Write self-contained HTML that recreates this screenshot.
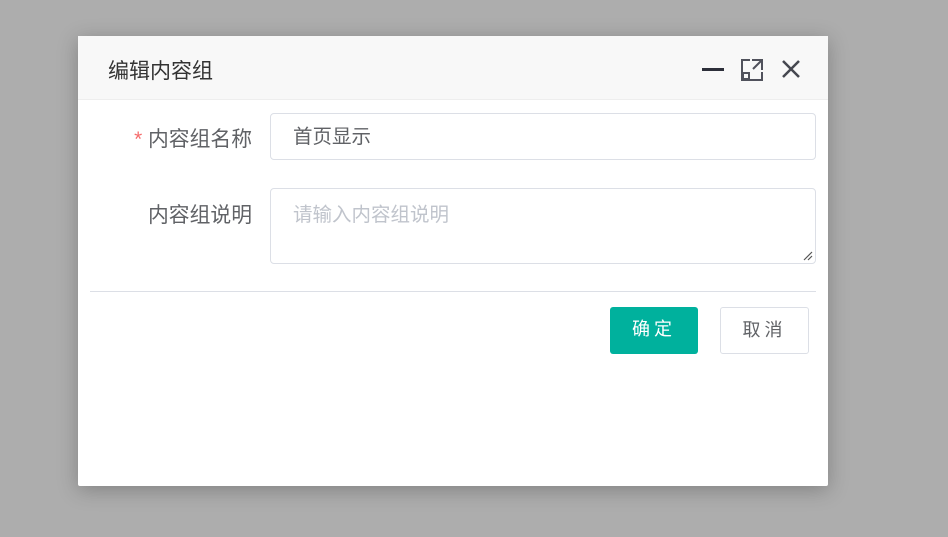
<!DOCTYPE html>
<html><head><meta charset="utf-8"><style>
body{margin:0;width:948px;height:537px;background:#adadad;font-family:"Liberation Sans","Noto Sans CJK SC",sans-serif;position:relative;overflow:hidden}
.dlg{position:absolute;left:78px;top:36px;width:750px;height:450px;background:#fff;border-radius:2px;box-shadow:0 4px 20px rgba(0,0,0,.25)}
.hd{height:63px;background:#f8f8f8;border-bottom:1px solid #eee;position:relative}
.hd .t{position:absolute;left:30px;top:19px;font-size:21px;color:#333}
.lbl{position:absolute;right:576px;font-size:20.8px;color:#606266;white-space:nowrap}
.inp{position:absolute;left:192px;width:546px;border:1px solid #dcdfe6;border-radius:4px;box-sizing:border-box;font-size:19.5px}
.btn{position:absolute;top:271px;height:47px;border-radius:3px;box-sizing:border-box;font-size:18px;text-align:center;line-height:45px;letter-spacing:4px}
</style></head><body>
<div class="dlg">
<div class="hd"><div class="t">编辑内容组</div>
<svg style="position:absolute;left:620px;top:20px" width="110" height="26" viewBox="0 0 110 26">
<rect x="4" y="12" width="22" height="3" fill="#2d2f3a"/>
<g stroke="#50525c" stroke-width="2" fill="none"><path d="M52 4h-8v20h20v-8"/><path d="M54 4h10v10"/><path d="M64 4l-9 9"/><rect x="45" y="17" width="6" height="6"/>
<path d="M85 5l16 16M101 5l-16 16" stroke="#45474f" stroke-width="2.5"/></g></svg>
</div>
<div class="lbl" style="top:86px"><span style="color:#f56c6c">*</span> 内容组名称</div>
<div class="inp" style="top:77px;height:47px;line-height:47px;padding-left:22px;color:#606266">首页显示</div>
<div class="lbl" style="top:162px">内容组说明</div>
<div class="inp" style="top:152px;height:76px;padding:9px 22px;color:#c0c4cc">请输入内容组说明
<svg style="position:absolute;right:2px;bottom:2px" width="10" height="10"><path d="M1 9L9 1M5 9L9 5" stroke="#555" stroke-width="1.2"/></svg></div>
<div style="position:absolute;left:12px;right:12px;top:255px;border-top:1px solid #dcdfe6"></div>
<div class="btn" style="left:532px;width:88px;background:#00b19d;color:#fff">确定</div>
<div class="btn" style="left:642px;width:89px;border:1px solid #dcdfe6;color:#606266">取消</div>
</div>
</body></html>
